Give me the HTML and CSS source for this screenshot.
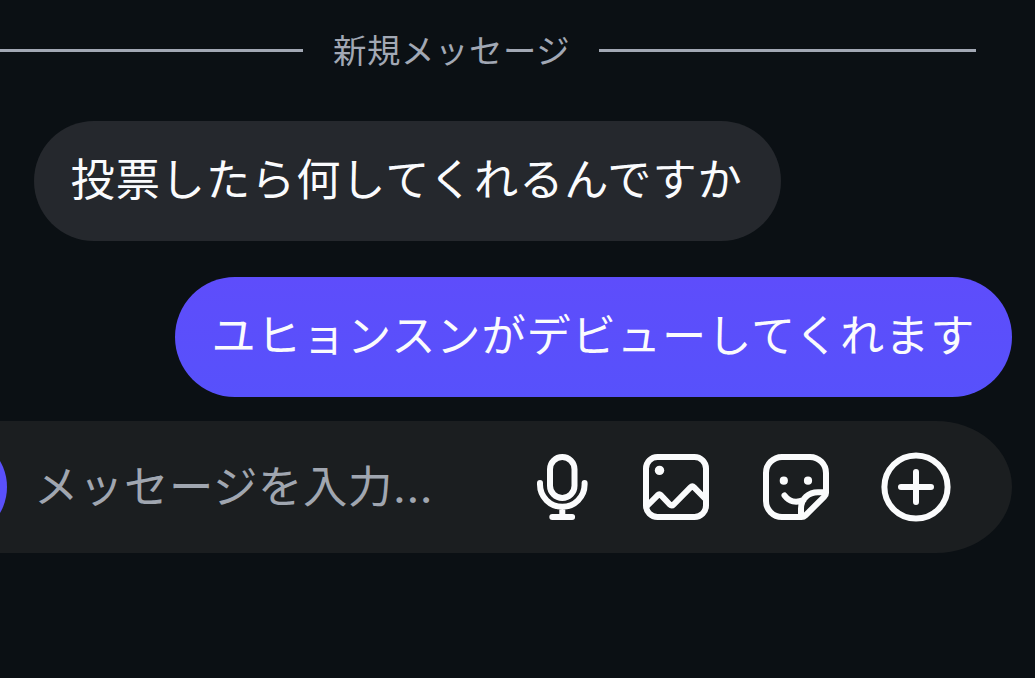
FILE: index.html
```html
<!DOCTYPE html>
<html lang="ja">
<head>
<meta charset="utf-8">
<title>メッセージ</title>
<link rel="stylesheet" href="styles.css">
</head>
<body>
<main class="chat">
  <div class="divider"><span class="divider-label">新規メッセージ</span></div>
  <div class="thread">
    <p class="bubble received">投票したら何してくれるんですか</p>
    <p class="bubble sent">ユヒョンスンがデビューしてくれます</p>
  </div>
  <div class="composer">
    <span class="camera"></span>
    <span class="placeholder">メッセージを入力<span class="dots">...</span></span>
    <div class="actions">
      <svg class="icon" viewBox="0 0 72 72">
        <rect x="21" y="6" width="24.5" height="41" rx="12.25"/>
        <path d="M11 32v1.5a22.3 22.3 0 0 0 44.6 0V32M33.3 56v9M23.3 66h19.8"/>
      </svg>
      <svg class="icon" viewBox="0 0 72 72">
        <rect x="6" y="6" width="60" height="60" rx="11.5"/>
        <path d="M7 55L17.6 44.3Q19.3 42.7 21 44.3L30 53.7Q31.7 55.5 33.4 53.7L50.5 36.3Q52.3 34.5 54.1 36.3L65 47.5"/>
        <circle class="solid" cx="19.5" cy="19.4" r="4.7"/>
      </svg>
      <svg class="icon" viewBox="0 0 72 72">
        <path d="M66 42V22A16 16 0 0 0 50 6H22A16 16 0 0 0 6 22V50A16 16 0 0 0 22 66H41.5Q43.8 66 45.5 64.3L64.3 45.6Q66 44 66 42Z"/>
        <path d="M65 41.2H58C48.5 41.2 41 48 41 57.5V65M24.5 44.5C29 50.5 36 52.3 43.5 49"/>
        <circle class="solid" cx="23.8" cy="29.7" r="4.1"/>
        <circle class="solid" cx="48" cy="29.7" r="4.1"/>
      </svg>
      <svg class="icon" viewBox="0 0 72 72">
        <circle cx="36" cy="36" r="31.6"/>
        <path d="M36 21v30M21 36h30"/>
      </svg>
    </div>
  </div>
</main>
</body>
</html>
```
FILE: styles.css
```css
* { box-sizing: border-box; }

body {
  margin: 0;
  background: #0b1014;
  font-family: "Noto Sans CJK JP", sans-serif;
}

.chat {
  display: flex;
  flex-direction: column;
  width: 1035px;
  height: 678px;
  overflow: hidden;
}

.divider {
  display: flex;
  align-items: center;
  gap: 30px;
  height: 101px;
  padding-right: 59px;
  color: #a2a8b4;
  font-size: 33.4px;
  letter-spacing: 0.6px;
  line-height: 50px;
  white-space: nowrap;
}

.divider::before,
.divider::after {
  content: "";
  height: 3px;
  background: #a2a8b4;
}

.divider::before { width: 303px; }
.divider::after { flex: 1; }

.divider-label {
  width: 236px;
  padding-bottom: 4px;
}

.thread {
  display: flex;
  flex-direction: column;
  gap: 36px;
  padding: 20px 23px 0 34px;
}

.bubble {
  height: 120px;
  margin: 0;
  padding: 24px 36px 0 36.5px;
  border-radius: 60px;
  color: #fafbfd;
  font-size: 44.2px;
  letter-spacing: 0.95px;
  line-height: 64px;
  white-space: nowrap;
}

.received {
  align-self: flex-start;
  width: 747px;
  background: #25282d;
}

.sent {
  align-self: flex-end;
  width: 837px;
  background: linear-gradient(#5e4dfb, #5751fb);
}

.composer {
  display: flex;
  align-items: center;
  width: 1012px;
  height: 132px;
  margin-top: 24px;
  border-radius: 0 76px 76px 0 / 0 66px 66px 0;
  background: #1b1e20;
}

.camera {
  flex: none;
  width: 104px;
  height: 104px;
  margin-left: -97px;
  border-radius: 50%;
  background: #5a50fb;
}

.placeholder {
  width: 495px;
  margin-left: 27px;
  padding-bottom: 3px;
  color: #a0a6b0;
  font-size: 44.4px;
  letter-spacing: 0.6px;
  line-height: 64px;
  white-space: nowrap;
}

.dots {
  font-family: Inter, sans-serif;
}

.actions {
  display: flex;
  gap: 48px;
}

.icon {
  width: 72px;
  height: 72px;
  fill: none;
  stroke: #fafbfc;
  stroke-width: 6;
  stroke-linecap: round;
  stroke-linejoin: round;
}

.icon:first-child {
  margin-right: -9px;
}

.icon .solid {
  fill: #fafbfc;
  stroke: none;
}
```
